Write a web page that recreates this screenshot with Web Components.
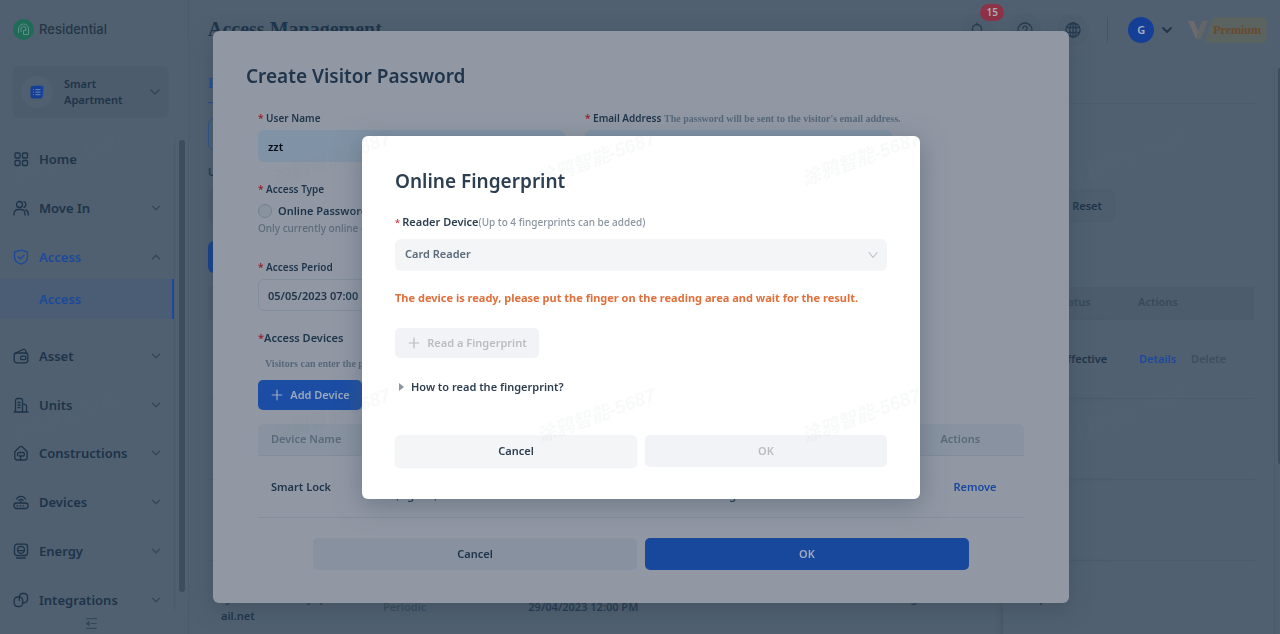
<!DOCTYPE html>
<html lang="en">
<head>
<meta charset="utf-8">
<meta name="viewport" content="width=device-width, initial-scale=1">
<title>Access Management</title>
<style>
  html, body { margin: 0; height: 100%; }
  body {
    --page: #506070;
    --ink: #1d3349;
    --muted: #37495b;
    --line: #4b5b6b;
    --blue: #1c499c;
    --fill: #4d5c6c;
    --sheet: #9198a4;
    --serif: "Liberation Serif", "Times New Roman", serif;
    background: var(--page);
    color: var(--ink);
    font: 600 11px/16px "Noto Sans", "Open Sans", sans-serif;
    overflow: hidden;
  }
</style>
</head>
<body>
<app-shell></app-shell>

<script>
const define = (name, html, setup) => {
  const template = document.createElement('template');
  template.innerHTML = html;
  customElements.define(name, class extends HTMLElement {
    constructor() {
      super();
      this.attachShadow({ mode: 'open' }).append(template.content.cloneNode(true));
    }
    connectedCallback() { if (setup) setup(this, this.shadowRoot); }
  });
};

const ICONS = {
  home: '<rect x="2" y="2" width="5" height="5" rx="1"/><rect x="9.500" y="2" width="5" height="5" rx="1"/><rect x="2" y="9.500" width="5" height="5" rx="1"/><rect x="9.500" y="9.500" width="5" height="5" rx="1"/>',
  people: '<circle cx="6.500" cy="4.500" r="3"/><path d="M1 15v-1.500a4 4 0 0 1 4-4h3a4 4 0 0 1 4 4V15M11 1.700a3 3 0 0 1 0 5.600M12.500 9.800a4 4 0 0 1 2.700 3.700V15"/>',
  shield: '<path d="M8 1.200 14.500 3v5c0 3.600-2.500 5.800-6.500 7.200C4 13.800 1.500 11.600 1.500 8V3z"/><path d="m5.200 7.800 2.300 2.100 3.500-3.600"/>',
  wallet: '<rect x="1.200" y="5" width="13.600" height="9.800" rx="2.500"/><path d="M2 5.300 10 1.500c1.300-.5 2.300.2 2.700 1.300l.7 2.200"/><rect x="7.500" y="8.200" width="5.500" height="3.500" rx="1.700"/>',
  building: '<path d="M1 15h14M2.500 15V3.500a2 2 0 0 1 2-2h3a2 2 0 0 1 2 2V15M9.500 6.500l2.500 1a2 2 0 0 1 1.500 2V15M5 5.500h2M5 8h2M5 10.500h2"/>',
  house: '<path d="M1.800 6.800 6.500 2a2 2 0 0 1 3 0l4.700 4.800v5.700a2.500 2.500 0 0 1-2.500 2.500H4.300a2.500 2.500 0 0 1-2.500-2.500z"/><path d="M4.500 10.500V9.300A2 2 0 0 1 6.500 7.500h3a2 2 0 0 1 2 2 1.500 1.500 0 0 1-1.500 1.500H6.300M7.500 11v3.500"/>',
  router: '<rect x="1" y="9" width="14" height="5.500" rx="2.500"/><path d="M4 11.800h.6M7 11.800h.6M10 11.800h.6M3.500 5a5.200 5.200 0 0 1 9 0M5.700 6.500a2.800 2.800 0 0 1 4.600 0M8 7v2"/>',
  meter: '<rect x="1.500" y="1.200" width="13" height="11.300" rx="2.500"/><circle cx="8" cy="6.800" r="3.500"/><path d="M4.700 7.700h6.600M3.500 15h9"/>',
  link: '<rect x="1.200" y="5" width="8.500" height="9.500" rx="3.500"/><path d="M6.300 8.500V5A3.300 3.300 0 0 1 9.600 1.500h1.600A3.300 3.300 0 0 1 14.500 5v2.500a3.300 3.300 0 0 1-3.300 3.300H9.500"/>',
  down: '<path d="m4.500 6.200 3.500 3.500 3.500-3.500"/>',
  up: '<path d="m4.500 9.700 3.500-3.500 3.500 3.500"/>',
  wide: '<path d="m4 6 4 4 4-4"/>',
  select: '<path d="m4 5.500 4 5 4-5"/>',
  plus: '<path d="M8 2.500v11M2.500 8h11"/>',
  bell: '<path d="M3.500 12V7a4.500 4.500 0 0 1 9 0v5M1.800 12.200h12.400M6.500 14.800h3M8 1v1.500"/>',
  help: '<circle cx="8" cy="8" r="7"/><path d="M5.800 6.300a2.200 2.200 0 1 1 3.300 1.900c-.8.500-1.100.9-1.100 1.700M8 11.500v.8"/>',
  globe: '<circle cx="8" cy="8" r="7"/><ellipse cx="8" cy="8" rx="3.200" ry="7"/><path d="M1.500 5.500h13M1.500 10.500h13M8 1v14"/>',
  fold: '<path d="M2 2h12M7.500 8H14M2 14h12"/><path d="M5 5.500v5L2 8z" fill="currentColor"/>'
};

define('ui-icon', `
  <style>
    :host { display: block; flex: none; width: var(--size, 16px); height: var(--size, 16px); }
    svg { display: block; width: 100%; height: 100%; fill: none; stroke: currentColor;
          stroke-width: var(--stroke, 1.3); stroke-linecap: round; stroke-linejoin: round; }
  </style>
  <svg viewBox="0 0 16 16" aria-hidden="true"></svg>`,
  (host, root) => { root.querySelector('svg').innerHTML = ICONS[host.getAttribute('name')] || ''; });

define('nav-item', `
  <style>
    :host { display: block; font-size: 13px; line-height: 24px; }
    :host([active]) { color: var(--blue); }
    a { display: flex; align-items: center; color: inherit; text-decoration: none; padding: 0 10px 0 13px; gap: 10px; }
    .label { flex: 1; }
    .arrow { --stroke: 1.5; color: var(--muted); }
  </style>
  <a href="#"><span class="icon"></span><span class="label"><slot></slot></span></a>
  <slot name="sub"></slot>`,
  (host, root) => {
    root.querySelector('.icon').innerHTML = `<ui-icon name="${host.getAttribute('icon')}"></ui-icon>`;
    if (host.hasAttribute('arrow'))
      root.querySelector('a').insertAdjacentHTML('beforeend',
        `<ui-icon class="arrow" name="${host.getAttribute('arrow')}"></ui-icon>`);
  });

define('app-sidebar', `
  <style>
    :host { display: flex; flex-direction: column; height: 100%; box-sizing: border-box;
            border-right: 1px solid var(--line); }
    .brand { display: flex; align-items: center; gap: 5px; margin: 18px 0 26px 13px; height: 22px;
             font: 500 13px/22px Inter, sans-serif; color: #243646; }
    .brand svg { width: 21px; height: 21px; }
    .site { display: flex; align-items: center; margin: 0 19px 20px 13px; padding: 10px 6px 10px 8px;
            background: var(--fill); border: 0; border-radius: 6px; color: inherit; font: inherit; text-align: left; }
    .badge { display: grid; place-items: center; width: 32px; height: 32px; border-radius: 50%; background: #506071; }
    .badge svg { width: 16px; height: 16px; }
    .site span { flex: 1; margin-left: 11px; }
    .site ui-icon { color: #2f4459; }
    .scroll { flex: 1; min-height: 0; display: flex; }
    nav { flex: 1; display: flex; flex-direction: column; justify-content: space-between; padding-top: 9px; }
    .sub { display: block; margin-top: 10px; padding-left: 39px; line-height: 40px; color: var(--blue);
           text-decoration: none; background: #4a5d74; border-right: 2px solid var(--blue); }
    .bar { width: 14px; box-sizing: border-box; padding: 2px 3px 20px 4px; border-left: 1px solid var(--line); }
    .bar i { display: block; height: 100%; border-radius: 4px; background: #3d4d5c; }
    footer { height: 22px; display: flex; align-items: center; padding-left: 85px; color: #33475b; }
    footer button { all: unset; --size: 13px; }
  </style>
  <div class="brand">
    <svg viewBox="0 0 21 21" aria-hidden="true"><circle cx="10.500" cy="10.500" r="10.500" fill="#1f6b58"/>
      <path d="M5.500 14V10a5 5 0 0 1 10 0v5M8 13v-3a2.500 2.500 0 0 1 5 0v1.500h-2.500M10.500 11.500v4h5" fill="none" stroke="#5f9089"/></svg>
    Residential
  </div>
  <button class="site" type="button">
    <div class="badge"><svg viewBox="0 0 16 16" aria-hidden="true"><path d="M5 1.500h8a2 2 0 0 1 2 2L14 12" fill="#244f9f"/><rect x="1.500" y="2" width="12" height="12.500" rx="2" fill="#153f94"/><path d="M4 5.700h.8M6.500 5.700h5M4 8.200h.8M6.500 8.200h5M4 10.700h.8M6.500 10.700h5" stroke="#6d86b5"/></svg></div>
    <span>Smart<br>Apartment</span><ui-icon name="wide"></ui-icon>
  </button>
  <div class="scroll">
    <nav>
      <nav-item icon="home">Home</nav-item>
      <nav-item icon="people" arrow="down">Move In</nav-item>
      <nav-item icon="shield" arrow="up" active>Access<a slot="sub" class="sub" href="#">Access</a></nav-item>
      <nav-item icon="wallet" arrow="down">Asset</nav-item>
      <nav-item icon="building" arrow="down">Units</nav-item>
      <nav-item icon="house" arrow="down">Constructions</nav-item>
      <nav-item icon="router" arrow="down">Devices</nav-item>
      <nav-item icon="meter" arrow="down">Energy</nav-item>
      <nav-item icon="link" arrow="down">Integrations</nav-item>
    </nav>
    <div class="bar"><i></i></div>
  </div>
  <footer><button type="button" aria-label="Collapse menu"><ui-icon name="fold"></ui-icon></button></footer>`);

define('app-header', `
  <style>
    :host { display: flex; align-items: center; height: 60px; padding: 0 13px 0 20px; box-sizing: border-box; }
    h1 { flex: 1; margin: 0; font: 700 20px/24px var(--serif); margin-bottom: 2px; }
    button { all: unset; position: relative; display: grid; place-items: center; width: 32px; height: 32px;
             border-radius: 50%; margin-right: 16px; background: #4e5e6e; color: #253b50; }
    .count { position: absolute; left: 19px; bottom: 25px; width: 24px; border-radius: 9px; text-align: center;
             background: #8f3147; color: #a9adb6; font-size: 10px; line-height: 17px; }
    .rule { width: 1px; height: 26px; margin: 0 20px 0 2px; background: #445566; }
    .avatar { width: 26px; border-radius: 50%; background: #153f96; color: #a3adc0; text-align: center;
              font-size: 11px; line-height: 26px; margin-right: 4px; }
    .chev { --stroke: 1.8; --size: 18px; margin-right: 12px; color: #22374b; }
    .v { flex: none; width: 20px; height: 20px; }
    .premium { margin-left: -4px; padding: 0 6px 0 9px; background: #5a635f; border-radius: 5px;
               clip-path: polygon(9px 0, 100% 0, 100% 100%, 0 100%);
               color: #694a2f; font: 700 12px/26px var(--serif); }
  </style>
  <h1>Access Management</h1>
  <button type="button" aria-label="Notifications"><ui-icon name="bell"></ui-icon><span class="count">15</span></button>
  <button type="button" aria-label="Help"><ui-icon name="help"></ui-icon></button>
  <button type="button" aria-label="Language"><ui-icon name="globe"></ui-icon></button>
  <span class="rule"></span>
  <span class="avatar">G</span><ui-icon class="chev" name="down"></ui-icon>
  <svg class="v" viewBox="0 0 20 20" aria-hidden="true"><path d="M0 1h6l4 11 4-11h6l-8 18H8z" fill="#6c6a6c"/><path d="m8 19 2-7 4-11h6l-8 18z" fill="#646567"/></svg>
  <span class="premium">Premium</span>`);

define('access-page', `
  <style>
    :host { display: block; padding: 0 20px 0 20px; }
    .tabs { display: flex; height: 43px; border-bottom: 1px solid var(--line); }
    .tabs a { color: var(--blue); text-decoration: none; border-bottom: 1px solid var(--blue);
              font: 700 14px/48px var(--serif); }
    .actions { margin-top: 14px; }
    button { font: inherit; box-sizing: border-box; border-radius: 6px; height: 32px; border: 0; }
    .ghost { border: 1px solid #2c5292; color: var(--blue); background: none; padding: 0 16px; }
    .filters { display: flex; align-items: flex-end; justify-content: space-between; margin: 14px 0 19px; padding-right: 139px; }
    label { display: grid; gap: 10px; }
    input { box-sizing: border-box; height: 32px; width: 240px; border: 0; border-radius: 6px; background: var(--fill); }
    .reset { background: #4e5e6e; border: 1px solid #4c5c6c; color: inherit; padding: 0 12px; }
    .add { background: #123e91; color: #9fa9bb; padding: 0 16px; margin-bottom: 14px; }
    table { width: 100%; border-collapse: collapse; table-layout: fixed; }
    th, td { text-align: left; font-weight: 600; padding: 0 0 0 13px; }
    th { height: 33px; padding-bottom: 3px; box-sizing: border-box; background: var(--fill); color: var(--muted); }
    td { height: 80px; border-bottom: 1px solid var(--line); }
    td:nth-child(5) { box-shadow: -5px 0 5px -4px #3d4d5ca0; }
    tr:nth-child(1) td { height: 78px; }
    tr:last-child td { height: 91px; line-height: 18px; }
    .dim { color: var(--muted); padding-left: 18px; }
    .time { padding-left: 17px; }
    a { color: var(--blue); text-decoration: none; }
    th.status { padding-left: 54px; }
    td.status { padding-left: 58px; }
    .expired { padding-left: 24px; }
    .act { padding-left: 20px; }
    .links { display: flex; gap: 15px; padding-left: 1px; }
    .off { color: #3d4e5f; }
  </style>
  <div class="tabs"><a href="#">Effective</a></div>
  <div class="actions"><button class="ghost" type="button">Create</button></div>
  <div class="filters">
    <label>User Name<input></label>
    <button class="reset" type="button">Reset</button>
  </div>
  <button class="add" type="button">Add</button>
  <table>
    <colgroup><col style="width:15%"><col style="width:14%"><col style="width:29%"><col style="width:18%"><col><col style="width:13%"></colgroup>
    <thead><tr><th>Email</th><th>Type</th><th>Time</th><th>Place</th><th class="status">Status</th><th class="act">Actions</th></tr></thead>
    <tbody>
      <tr><td></td><td></td><td></td><td></td><td class="status">Effective</td><td class="act"><div class="links"><a href="#">Details</a><span class="off">Delete</span></div></td></tr>
      <tr><td></td><td></td><td></td><td></td><td></td><td></td></tr>
      <tr><td></td><td></td><td></td><td></td><td></td><td></td></tr>
      <tr><td>tyler.residents@yopm<br>ail.net</td><td class="dim">Periodic</td><td class="time">29/04/2023 12:00 PM</td><td>Student Housing<br>&nbsp;</td><td class="expired">Expired<br>&nbsp;</td><td></td></tr>
    </tbody>
  </table>`);

define('ui-button', `
  <style>
    :host { display: block; }
    button { display: flex; align-items: center; justify-content: center; gap: 6px; width: 100%; white-space: nowrap;
             height: var(--h, 32px); box-sizing: border-box; padding: 0 12px; border: 0; border-radius: 5px;
             background: var(--bg); color: var(--fg); font: inherit; box-shadow: var(--lift, none); }
    ui-icon { --size: 14px; --stroke: 1.4; }
  </style>
  <button type="button"><slot></slot></button>`,
  (host, root) => {
    const button = root.querySelector('button');
    button.disabled = host.hasAttribute('disabled');
    if (host.hasAttribute('icon'))
      button.insertAdjacentHTML('afterbegin', `<ui-icon name="${host.getAttribute('icon')}"></ui-icon>`);
  });

define('modal-layer', `
  <style>
    :host { position: fixed; inset: 0; display: flex; align-items: center; justify-content: center; padding-left: 2px; }
    section { box-sizing: border-box; padding: 31px 33px 32px; border-radius: 6px; width: var(--width);
              max-width: 100%; background: var(--bg-sheet); box-shadow: var(--shadow); }
    h2 { margin: 0; font-size: 19px; font-weight: 600; line-height: 28px; color: var(--title); }
  </style>
  <section role="dialog"><h2></h2><slot></slot></section>`,
  (host, root) => { root.querySelector('h2').textContent = host.getAttribute('heading'); });

define('visitor-dialog', `
  <style>
    :host { display: contents; }
    modal-layer { --width: 856px; --bg-sheet: var(--sheet); --title: #20354b; --shadow: 0 6px 20px #3b4a5890; }
    .form { margin: 20px 12px 0; }
    .pair { display: grid; grid-template-columns: 307px 307px; gap: 20px; }
    label, .caption { display: block; font-size: 10px; white-space: nowrap; }
    label::before, .caption::before, .devices::before { content: "* "; color: #94202f; }
    .note { font: 700 10px/15px var(--serif); color: #56677a; }
    input[type=text] { box-sizing: border-box; width: 100%; height: 32px; margin: 4px 0 0; padding: 0 10px; border: 0;
                       border-radius: 6px; background: #8092a5; color: #050c18; font: inherit; }
    .caption { margin-top: 19px; }
    .radio { display: flex; align-items: center; gap: 6px; margin-top: 5px; height: 18px; }
    .radio label { font-size: 11px; }
    .radio label::before { content: none; }
    .radio input { appearance: none; width: 14px; height: 14px; margin: 0; border: 1px solid #717f8d; border-radius: 50%; background: #8993a0; }
    .help { font-size: 10px; font-weight: 500; color: #5b6a7b; }
    .period { margin-top: 23px; }
    .period + input[type=text] { width: 307px; background: none; border: 1px solid #828d9a; padding: 0 9px; color: var(--ink); }
    .devices { margin-top: 19px; }
    .devices::before { content: "*"; }
    .intro { margin: 10px 0 8px 7px; font: 700 10px/16px var(--serif); color: #56677a; }
    .add { width: 104px; --h: 30px; --bg: #1b4da4; --fg: #9ba8bd; }
    table { width: 100%; margin-top: 14px; border-collapse: collapse; table-layout: fixed; }
    th, td { text-align: left; font-weight: 600; padding: 0 0 0 13px; }
    th { height: 31px; padding-bottom: 2px; box-sizing: border-box; color: #5a6979; background: #8892a0; border-bottom: 1px solid #808c99; }
    thead th:first-child { border-radius: 6px 0 0 0; }
    thead th:last-child { border-radius: 0 6px 0 0; }
    td { height: 61px; border-bottom: 1px solid #858f9c; line-height: 17px; }
    td a { margin-left: 13px; color: #19479f; text-decoration: none; }
    th:last-child, td:last-child { padding-left: 16px; }
    .buttons { display: grid; grid-template-columns: 1fr 1fr; gap: 8px; margin: 20px 67px 1px; }
    .no { --bg: #8791a0; --fg: var(--ink); }
    .yes { --bg: #18489c; --fg: #a0abc0; }
  </style>
  <modal-layer heading="Create Visitor Password">
    <div class="form">
      <div class="pair">
        <div><label for="name">User Name</label><input id="name" type="text" value="zzt"></div>
        <div><label for="mail">Email Address <span class="note">The password will be sent to the visitor's email address.</span></label><input id="mail" type="text"></div>
      </div>
      <div class="caption">Access Type</div>
      <div class="radio"><input type="radio" id="online"><label for="online">Online Password</label></div>
      <div class="help">Only currently online devices</div>
      <label class="period" for="period">Access Period</label><input id="period" type="text" value="05/05/2023 07:00 PM">
      <div class="devices">Access Devices</div>
      <p class="intro">Visitors can enter the password</p>
      <ui-button class="add" icon="plus">Add Device</ui-button>
      <table>
        <colgroup><col style="width:13%"><col style="width:36%"><col style="width:38%"><col></colgroup>
        <thead><tr><th>Device Name</th><th></th><th></th><th>Actions</th></tr></thead>
        <tbody><tr><td>Smart Lock</td><td>Smart<br>Lock(zigbee)</td><td>Building<br>Student Housing</td><td><a href="#">Remove</a></td></tr></tbody>
      </table>
    </div>
    <div class="buttons"><ui-button class="no">Cancel</ui-button><ui-button class="yes">OK</ui-button></div>
  </modal-layer>`);

define('fingerprint-dialog', `
  <style>
    :host { display: contents; }
    modal-layer { --width: 558px; --bg-sheet: #fff; --title: #2c3e50; --shadow: 0 6px 26px #4a586980; color: #2c3e50; }
    .label { margin: 19px 0 8px; }
    .label label::before { content: "* "; font-size: 9px; color: #e0343f; }
    .label small { font-size: 10px; font-weight: 500; color: #8a95a1; }
    .select { display: grid; align-items: center; }
    select, .select ui-icon { grid-area: 1 / 1; }
    select { appearance: none; width: 100%; height: 32px; padding: 0 10px 2px; border: 0; border-radius: 6px;
             background: #f4f5f7; color: #5a6a79; font: inherit; opacity: 1; }
    .select ui-icon { justify-self: end; margin-right: 6px; color: #bcc1c7; --stroke: 1.1; pointer-events: none; }
    .ready { margin: 19px 0 22px; color: #e0703c; font-weight: 700; }
    .read { width: 144px; --h: 30px; --bg: #f2f3f7; --fg: #b9bdc2; }
    details { margin: 21px 0 40px; }
    summary { display: flex; align-items: center; gap: 7px; margin-left: 4px; list-style: none; }
    summary::before { content: ""; border: solid transparent; border-width: 4px 0 4px 5px; border-left-color: #8c97a3; }
    .buttons { display: grid; grid-template-columns: 1fr 1fr; gap: 8px; }
    .no { --bg: #f4f5f7; --fg: #2c3e50; --lift: 0 1px 2px #f0f1f3; }
    .yes { --bg: #f2f3f7; --fg: #b9bdc2; }
  </style>
  <modal-layer heading="Online Fingerprint">
    <div class="label"><label for="reader">Reader Device</label><small>(Up to 4 fingerprints can be added)</small></div>
    <div class="select"><select id="reader"><option>Card Reader</option></select><ui-icon name="select"></ui-icon></div>
    <p class="ready">The device is ready, please put the finger on the reading area and wait for the result.</p>
    <ui-button class="read" icon="plus" disabled>Read a Fingerprint</ui-button>
    <details><summary>How to read the fingerprint?</summary></details>
    <div class="buttons"><ui-button class="no">Cancel</ui-button><ui-button class="yes" disabled>OK</ui-button></div>
  </modal-layer>`);

define('page-watermark', `
  <style>
    :host { position: fixed; inset: 0; overflow: hidden; pointer-events: none; display: grid;
            grid-template-columns: repeat(5, 265px); grid-auto-rows: 257px; margin: 30px 0 0 -66px; }
    span { place-self: center; transform: rotate(-20deg); white-space: nowrap; color: #6878880c;
           font: italic 700 19px/24px "Liberation Sans", "Noto Sans CJK SC", sans-serif; }
  </style>`,
  (host, root) => {
    for (let i = 0; i < 10; i++)
      root.append(Object.assign(document.createElement('span'), { textContent: '涂鸦智能-5687', ariaHidden: 'true' }));
  });

define('app-shell', `
  <style>
    :host { display: grid; grid-template-columns: 189px minmax(0, 1fr) 6px; height: 100vh; }
    main { overflow: hidden; min-width: 0; }
    access-page { padding-left: 19px; }
    app-header { padding-left: 19px; margin-right: -6px; }
    .bar { margin-top: 66px; padding: 2px 0 170px 3px; border-left: 1px solid var(--line); }
    .bar i { display: block; height: 100%; border-radius: 4px 0 0 4px; background: #3d4d5c; }
  </style>
  <app-sidebar></app-sidebar>
  <main><app-header></app-header><access-page></access-page></main>
  <div class="bar"><i></i></div>
  <visitor-dialog></visitor-dialog>
  <fingerprint-dialog></fingerprint-dialog>
  <page-watermark></page-watermark>`);
</script>
</body>
</html>
